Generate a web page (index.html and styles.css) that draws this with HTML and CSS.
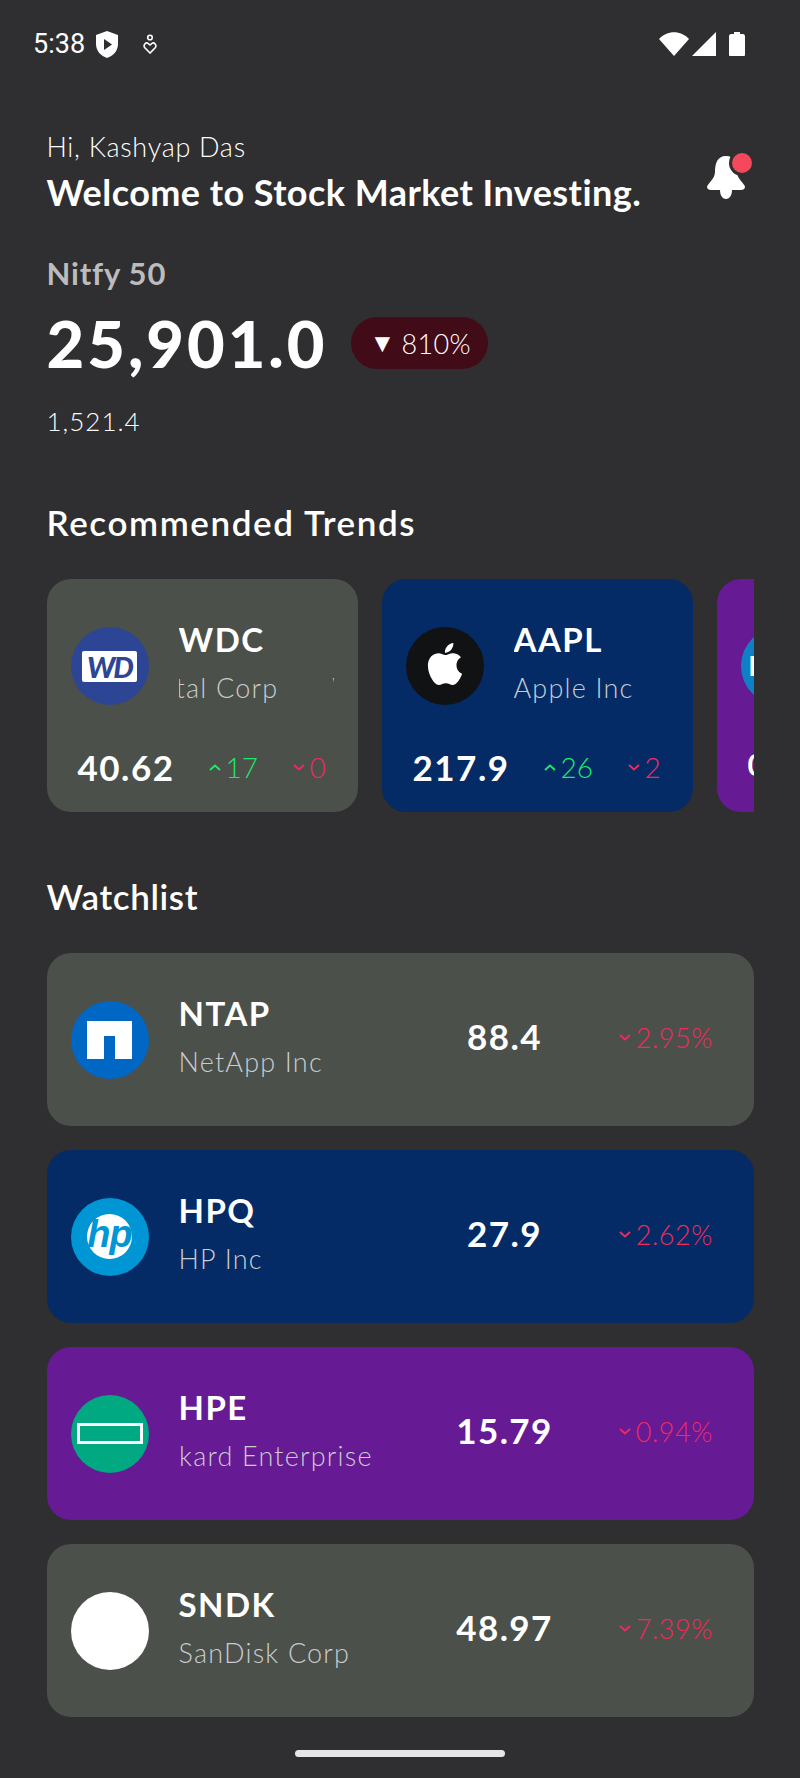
FILE: index.html
```html
<!DOCTYPE html>
<html>
<head>
    <title>Stock Market Investing</title>
    <link rel="stylesheet" href="styles.css">
</head>
<body>
    <div class="status-bar">
        <div class="status-left">
            <span class="time">5:38</span>
            <svg class="icon-shield" viewBox="0 0 22 27"><path d="M11 0 L22 4 V13 C22 20 17 25 11 27 C5 25 0 20 0 13 V4 Z" fill="#fff"/><path d="M8 8 L16 13.5 L8 19 Z" fill="#2f2e30"/></svg>
            <svg class="icon-heart" viewBox="0 0 14 21"><circle cx="7" cy="3.5" r="2.3" fill="none" stroke="#fff" stroke-width="1.6"/><path d="M7 19 L1.6 13.5 C0 11 2.8 7.8 5 9.4 L7 11 L9 9.4 C11.2 7.8 14 11 12.4 13.5 Z" fill="none" stroke="#fff" stroke-width="1.6"/></svg>
        </div>
        <div class="status-right">
            <svg class="icon-wifi" viewBox="0 0 30 24"><path d="M0 7 C8 -2 22 -2 30 7 L15 24 Z" fill="#fff"/></svg>
            <svg class="icon-signal" viewBox="0 0 24 24"><path d="M24 0 V24 H0 Z" fill="#fff"/></svg>
            <svg class="icon-battery" viewBox="0 0 16 24"><path d="M5 0 H11 V2 H14 C15 2 16 3 16 4 V23 C16 24 15 24 14 24 H2 C1 24 0 24 0 23 V4 C0 3 1 2 2 2 H5 Z" fill="#fff"/></svg>
        </div>
    </div>

    <div class="page">
        <div class="header">
            <div>
                <div class="greeting">Hi, Kashyap Das</div>
                <h1 class="welcome">Welcome to Stock Market Investing.</h1>
            </div>
            <div class="bell">
                <svg class="bell-icon" viewBox="0 0 38 43"><path d="M19 0 C10 0 8 8 8 16 C8 23 0 28 0 31 C0 33 2 34 4 34 H13 C13 40 16 43 19 43 C22 43 25 40 25 34 H34 C36 34 38 33 38 31 C38 28 30 23 30 16 C30 8 28 0 19 0 Z" fill="#fff"/></svg>
                <span class="bell-dot"></span>
            </div>
        </div>

        <div class="index-name">Nitfy 50</div>
        <div class="index-row">
            <span class="index-value">25,901.0</span>
            <span class="badge"><span class="badge-arrow">▼</span>810%</span>
        </div>
        <div class="index-sub">1,521.4</div>

        <h2 class="section-title trends-title">Recommended Trends</h2>
        <div class="trends">
            <div class="trend-card grey">
                <div class="trend-top">
                    <div class="avatar wd"><span class="wd-box">WD</span></div>
                    <div class="names trend-names">
                        <div class="ticker">WDC</div>
                        <div class="company"><span class="scroll-wd">Western Digital Corp</span><span class="scroll-next">Western Digital Corp</span></div>
                    </div>
                </div>
                <div class="trend-bottom">
                    <span class="trend-value">40.62</span>
                    <span class="move up"><svg class="chev" viewBox="0 0 12 7"><path d="M1 6 L6 1.5 L11 6" /></svg>17</span>
                    <span class="move down"><svg class="chev" viewBox="0 0 12 7"><path d="M1 1 L6 5.5 L11 1" /></svg>0</span>
                </div>
            </div>
            <div class="trend-card blue">
                <div class="trend-top">
                    <div class="avatar apple">
                        <svg class="apple-logo" viewBox="0 0 24 24"><path d="M12.152 6.896c-.948 0-2.415-1.078-3.96-1.04-2.04.027-3.91 1.183-4.961 3.014-2.117 3.675-.546 9.103 1.519 12.09 1.013 1.454 2.208 3.09 3.792 3.039 1.52-.065 2.09-.987 3.935-.987 1.831 0 2.35.987 3.96.948 1.637-.026 2.676-1.48 3.676-2.948 1.156-1.688 1.636-3.325 1.662-3.415-.039-.013-3.182-1.221-3.22-4.857-.026-3.04 2.48-4.494 2.597-4.559-1.429-2.09-3.623-2.324-4.39-2.376-2-.156-3.675 1.09-4.61 1.09zM15.53 3.83c.843-1.012 1.4-2.427 1.245-3.83-1.207.052-2.662.805-3.532 1.818-.78.896-1.454 2.338-1.273 3.714 1.338.104 2.715-.688 3.559-1.701" fill="#fff"/></svg>
                    </div>
                    <div class="names trend-names">
                        <div class="ticker">AAPL</div>
                        <div class="company">Apple Inc</div>
                    </div>
                </div>
                <div class="trend-bottom">
                    <span class="trend-value">217.9</span>
                    <span class="move up"><svg class="chev" viewBox="0 0 12 7"><path d="M1 6 L6 1.5 L11 6" /></svg>26</span>
                    <span class="move down"><svg class="chev" viewBox="0 0 12 7"><path d="M1 1 L6 5.5 L11 1" /></svg>2</span>
                </div>
            </div>
            <div class="trend-card purple">
                <div class="trend-top">
                    <div class="avatar dell"><span class="dell-letter">D</span></div>
                </div>
                <div class="trend-bottom">
                    <span class="trend-value peek">0</span>
                </div>
            </div>
        </div>

        <h2 class="section-title watch-title">Watchlist</h2>
        <div class="watchlist">
            <div class="watch-card grey">
                <div class="avatar netapp">
                    <svg class="netapp-logo" viewBox="0 0 45 38"><path d="M0 0 H45 V38 H28 V15 H17 V38 H0 Z" fill="#fff"/></svg>
                </div>
                <div class="names watch-names">
                    <div class="ticker">NTAP</div>
                    <div class="company">NetApp Inc</div>
                </div>
                <div class="price">88.4</div>
                <div class="change"><svg class="chev" viewBox="0 0 12 7"><path d="M1 1 L6 5.5 L11 1" /></svg>2.95%</div>
            </div>
            <div class="watch-card blue">
                <div class="avatar hp"><span class="hp-disc">hp</span></div>
                <div class="names watch-names">
                    <div class="ticker">HPQ</div>
                    <div class="company">HP Inc</div>
                </div>
                <div class="price">27.9</div>
                <div class="change"><svg class="chev" viewBox="0 0 12 7"><path d="M1 1 L6 5.5 L11 1" /></svg>2.62%</div>
            </div>
            <div class="watch-card purple">
                <div class="avatar hpe"><span class="hpe-box"></span></div>
                <div class="names watch-names">
                    <div class="ticker">HPE</div>
                    <div class="company"><span class="scroll-hpe">Hewlett Packard Enterprise</span></div>
                </div>
                <div class="price">15.79</div>
                <div class="change"><svg class="chev" viewBox="0 0 12 7"><path d="M1 1 L6 5.5 L11 1" /></svg>0.94%</div>
            </div>
            <div class="watch-card grey">
                <div class="avatar sndk"></div>
                <div class="names watch-names">
                    <div class="ticker">SNDK</div>
                    <div class="company">SanDisk Corp</div>
                </div>
                <div class="price">48.97</div>
                <div class="change"><svg class="chev" viewBox="0 0 12 7"><path d="M1 1 L6 5.5 L11 1" /></svg>7.39%</div>
            </div>
        </div>
    </div>

    <div class="home-bar"></div>
</body>
</html>
```

FILE: styles.css
```css
body {
    margin: 0;
    width: 800px;
    height: 1778px;
    overflow: hidden;
    background-color: #2f2e30;
    color: #fff;
    font-family: Lato, "Open Sans", sans-serif;
    display: flex;
    flex-direction: column;
}

/* status bar */
.status-bar {
    height: 88px;
    padding: 0 55px 0 33px;
    display: flex;
    justify-content: space-between;
    align-items: center;
    flex-shrink: 0;
}

.status-left, .status-right {
    display: flex;
    align-items: center;
}

.time {
    font-family: Roboto, sans-serif;
    font-size: 27px;
    width: 63px;
}

.icon-shield { width: 22px; height: 27px; }
.icon-heart { width: 14px; height: 21px; margin-left: 25px; }
.icon-wifi { width: 30px; height: 24px; }
.icon-signal { width: 24px; height: 24px; margin-left: 3px; }
.icon-battery { width: 16px; height: 24px; margin-left: 13px; }

/* main column */
.page {
    padding: 0 46px 0 46.5px;
    flex-grow: 1;
}

.header {
    margin-top: 42px;
    display: flex;
    justify-content: space-between;
    align-items: flex-end;
}

.greeting {
    font-size: 27px;
    font-weight: 300;
    line-height: 34px;
    letter-spacing: 0.7px;
}

.welcome {
    margin: 6px 0 0;
    font-size: 36px;
    font-weight: 700;
    line-height: 44px;
    letter-spacing: 0.45px;
}

.bell {
    position: relative;
    width: 47px;
    height: 43px;
    margin-bottom: 15px;
}

.bell-icon {
    width: 38px;
    height: 43px;
    display: block;
}

.bell-dot {
    position: absolute;
    left: 25px;
    top: -3px;
    width: 20px;
    height: 20px;
    border-radius: 50%;
    background-color: #f4485c;
    box-shadow: 0 0 0 3px #2f2e30;
}

.index-name {
    margin-top: 39px;
    font-size: 31px;
    font-weight: 700;
    line-height: 40px;
    letter-spacing: 0.8px;
    color: #bcbcbd;
}

.index-row {
    margin-top: 17px;
    height: 66px;
    display: flex;
    align-items: center;
}

.index-value {
    font-size: 65px;
    font-weight: 900;
    line-height: 66px;
    letter-spacing: 3px;
    width: 304px;
}

.badge {
    width: 137px;
    height: 52px;
    box-sizing: border-box;
    padding-left: 19px;
    border-radius: 26px;
    background-color: #420b18;
    font-size: 27px;
    font-weight: 300;
    letter-spacing: 0.3px;
    color: #fff;
    display: flex;
    align-items: center;
}

.badge-arrow {
    font-family: "DejaVu Sans", sans-serif;
    font-size: 26px;
    width: 32px;
    color: #fff;
}

.index-sub {
    margin-top: 28px;
    font-size: 26px;
    font-weight: 300;
    line-height: 34px;
    letter-spacing: 1px;
}

.section-title {
    margin: 0;
    font-size: 35px;
    font-weight: 600;
    line-height: 44px;
}

.trends-title { margin-top: 62px; letter-spacing: 1.6px; }
.watch-title { margin-top: 62px; letter-spacing: 0.6px; }

/* recommended trends */
.trends {
    margin-top: 35px;
    display: flex;
    gap: 24px;
    overflow: hidden;
}

.trend-card {
    width: 311px;
    height: 233px;
    flex-shrink: 0;
    box-sizing: border-box;
    padding: 48px 24px 0;
    border-radius: 24px;
}

.trend-top {
    display: flex;
    align-items: center;
    height: 78px;
}

.trend-bottom {
    margin-top: 44px;
    height: 36px;
    padding-left: 7px;
    display: grid;
    grid-template-columns: 131px 84px auto;
    align-items: center;
}

.trend-value {
    font-size: 35px;
    font-weight: 700;
    letter-spacing: 1.5px;
    line-height: 36px;
}

.peek {
    margin-top: -6px;
    font-size: 30px;
}

.move {
    font-size: 28px;
    font-weight: 300;
    display: flex;
    align-items: center;
}

.up { color: #1de869; }
.down { color: #f0295f; }

.chev {
    width: 12px;
    height: 7px;
    margin-right: 5px;
    fill: none;
    stroke: currentColor;
    stroke-width: 2;
}

.grey { background-color: #4b504a; }
.blue { background-color: #042b65; }
.purple { background-color: #661a94; }

/* avatars */
.avatar {
    width: 78px;
    height: 78px;
    flex-shrink: 0;
    border-radius: 50%;
    display: flex;
    align-items: center;
    justify-content: center;
    overflow: hidden;
}

.wd { background-color: #2c4595; }

.wd-box {
    width: 55px;
    height: 31px;
    border-radius: 2px;
    background-color: #fff;
    color: #2c4595;
    font-size: 29px;
    font-weight: 900;
    font-style: italic;
    letter-spacing: -2px;
    line-height: 31px;
    text-align: center;
}

.apple { background-color: #101214; }
.apple-logo { width: 42px; height: 42px; margin-top: -4px; }

.dell {
    background-color: #0f80c8;
    justify-content: flex-start;
}

.dell-letter {
    margin-left: 8px;
    font-family: "Liberation Sans", sans-serif;
    font-size: 30px;
    font-weight: 700;
}

.netapp { background-color: #0067c5; }
.netapp-logo { width: 45px; height: 38px; }

.hp { background-color: #0096d6; }

.hp-disc {
    width: 45px;
    height: 45px;
    border-radius: 50%;
    background-color: #fff;
    color: #0096d6;
    font-family: "Liberation Sans", sans-serif;
    font-size: 38px;
    font-weight: 700;
    font-style: italic;
    letter-spacing: -1px;
    line-height: 40px;
    text-align: center;
}

.hpe { background-color: #01a982; }

.hpe-box {
    width: 66px;
    height: 21px;
    box-sizing: border-box;
    border: 3px solid #fff;
    flex-shrink: 0;
}

.sndk { background-color: #fff; }

/* names */
.names {
    margin-left: 30px;
    margin-bottom: 10px;
    overflow: hidden;
}

.trend-names { width: 155px; }
.watch-names { width: 198px; }

.ticker {
    font-size: 33px;
    font-weight: 700;
    line-height: 44px;
    letter-spacing: 1.5px;
    white-space: nowrap;
}

.company {
    margin-top: 10px;
    font-size: 27px;
    font-weight: 300;
    line-height: 34px;
    letter-spacing: 1.2px;
    color: #c9cbcf;
    white-space: nowrap;
    display: flex;
}

.scroll-wd { margin-left: -170px; }
.scroll-next { margin-left: 54px; }
.scroll-hpe { margin-left: -154px; }

/* watchlist */
.watchlist {
    margin-top: 35px;
    display: flex;
    flex-direction: column;
    gap: 24px;
}

.watch-card {
    height: 173px;
    padding: 0 41px 0 24px;
    border-radius: 24px;
    display: flex;
    align-items: center;
}

.price {
    width: 130px;
    margin-left: 63px;
    margin-bottom: 8px;
    text-align: center;
    font-size: 35px;
    font-weight: 700;
    letter-spacing: 1.4px;
}

.change {
    flex-grow: 1;
    margin-bottom: 4px;
    font-size: 27px;
    font-weight: 300;
    letter-spacing: 0.6px;
    color: #f0295f;
    display: flex;
    align-items: center;
    justify-content: flex-end;
}

.home-bar {
    align-self: center;
    flex-shrink: 0;
    width: 210px;
    height: 7px;
    margin-bottom: 21px;
    border-radius: 4px;
    background-color: #e6e6e6;
}
```
